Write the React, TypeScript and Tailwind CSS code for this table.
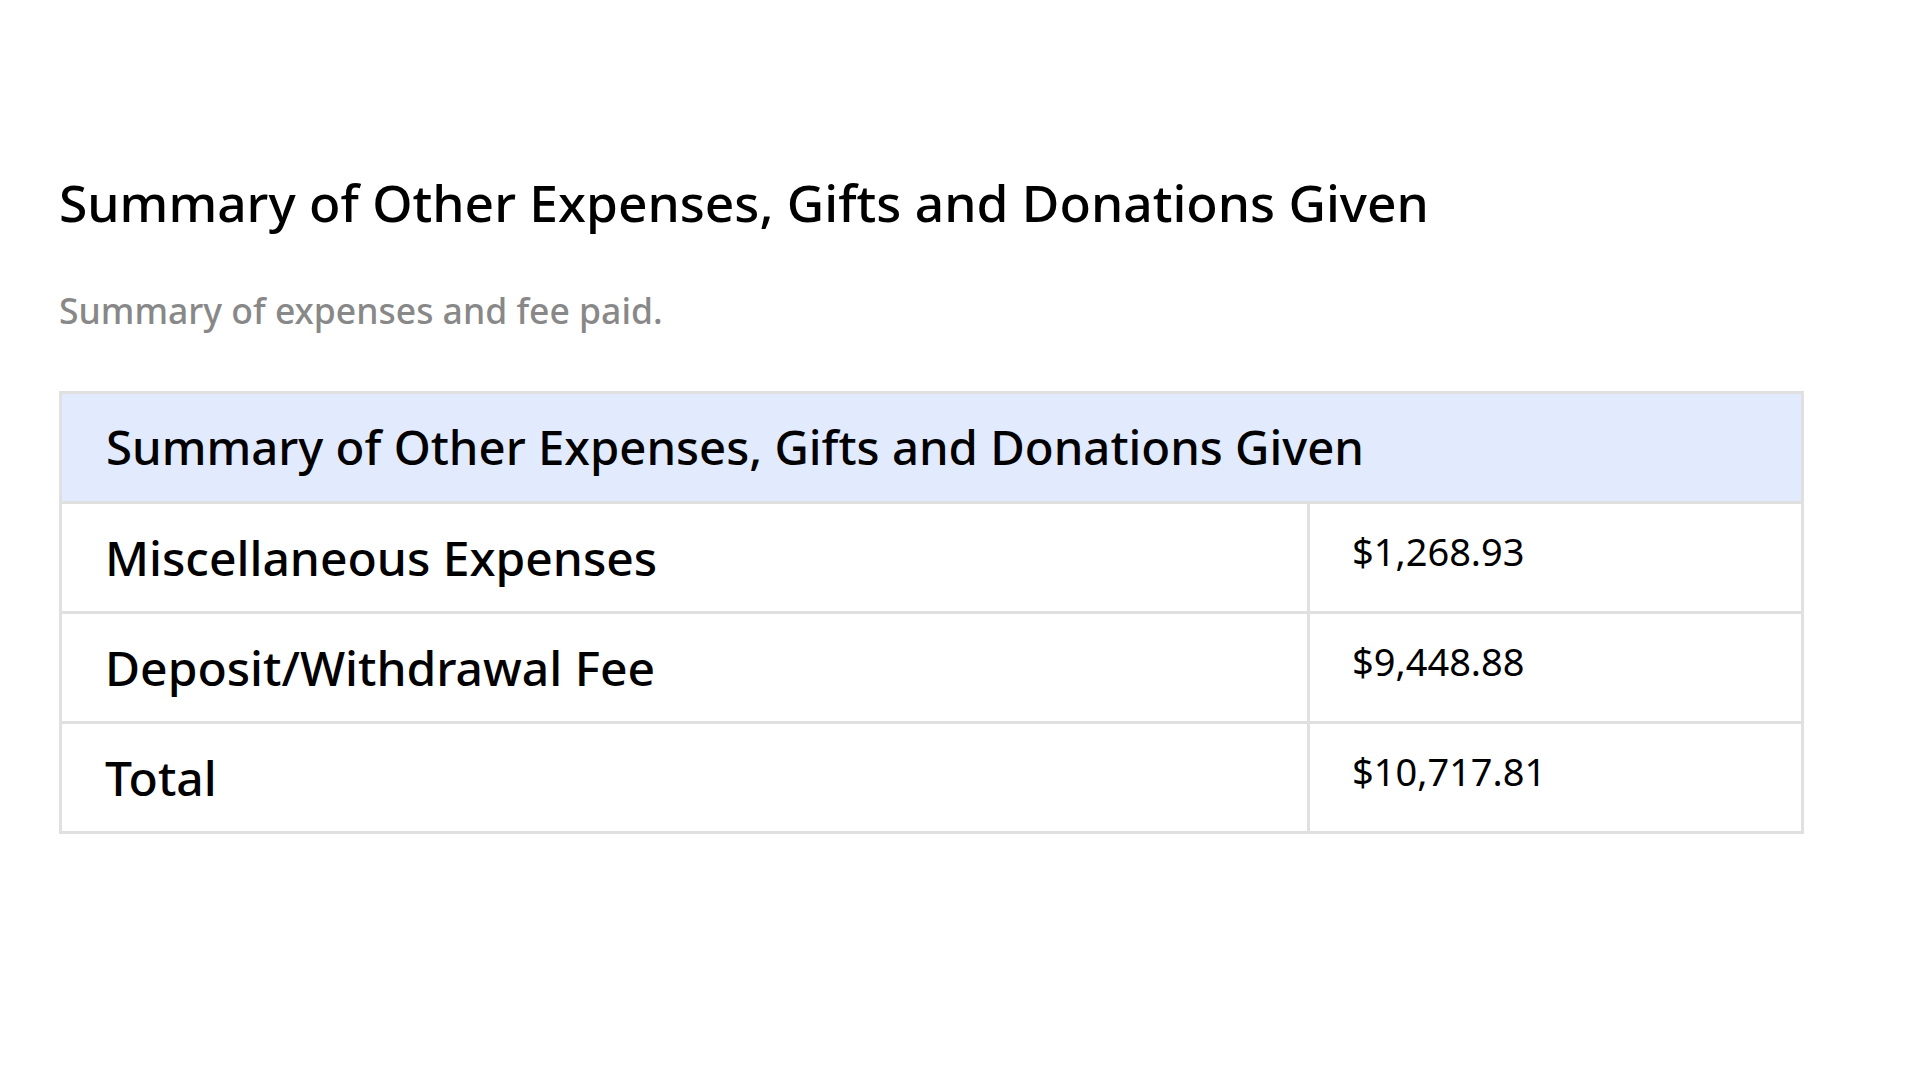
import React from 'react';

interface Row {
  label: string;
  value: string;
}

const rows: Row[] = [
  { label: 'Miscellaneous Expenses', value: '$1,268.93' },
  { label: 'Deposit/Withdrawal Fee', value: '$9,448.88' },
  { label: 'Total', value: '$10,717.81' },
];

const App: React.FC = () => {
  return (
    <div className="min-h-screen bg-white pl-[59px] pt-[166px] font-['Noto_Sans',sans-serif] text-black">
      <h1 className="text-[51.5px] font-medium leading-[72px]">
        Summary of Other Expenses, Gifts and Donations Given
      </h1>
      <p className="mt-[48px] text-[35.5px] font-medium leading-[48px] text-[#888888]">
        Summary of expenses and fee paid.
      </p>

      <table className="mt-[57px] w-[1745px] border-collapse border-[3px] border-[#e0e0e0]">
        <thead>
          <tr>
            <th
              colSpan={2}
              className="h-[110px] border-[3px] border-[#e0e0e0] bg-[#e2eafd] px-[44px] text-left text-[47.3px] font-medium"
            >
              Summary of Other Expenses, Gifts and Donations Given
            </th>
          </tr>
        </thead>
        <tbody>
          {rows.map((row) => (
            <tr key={row.label}>
              <td className="h-[110px] w-[1248px] border-[3px] border-[#e0e0e0] px-[43px] text-[48px] font-medium">
                {row.label}
              </td>
              <td className="h-[110px] border-[3px] border-[#e0e0e0] px-[42px] pt-[19px] align-top text-[38px]">
                {row.value}
              </td>
            </tr>
          ))}
        </tbody>
      </table>
    </div>
  );
};

export default App;
